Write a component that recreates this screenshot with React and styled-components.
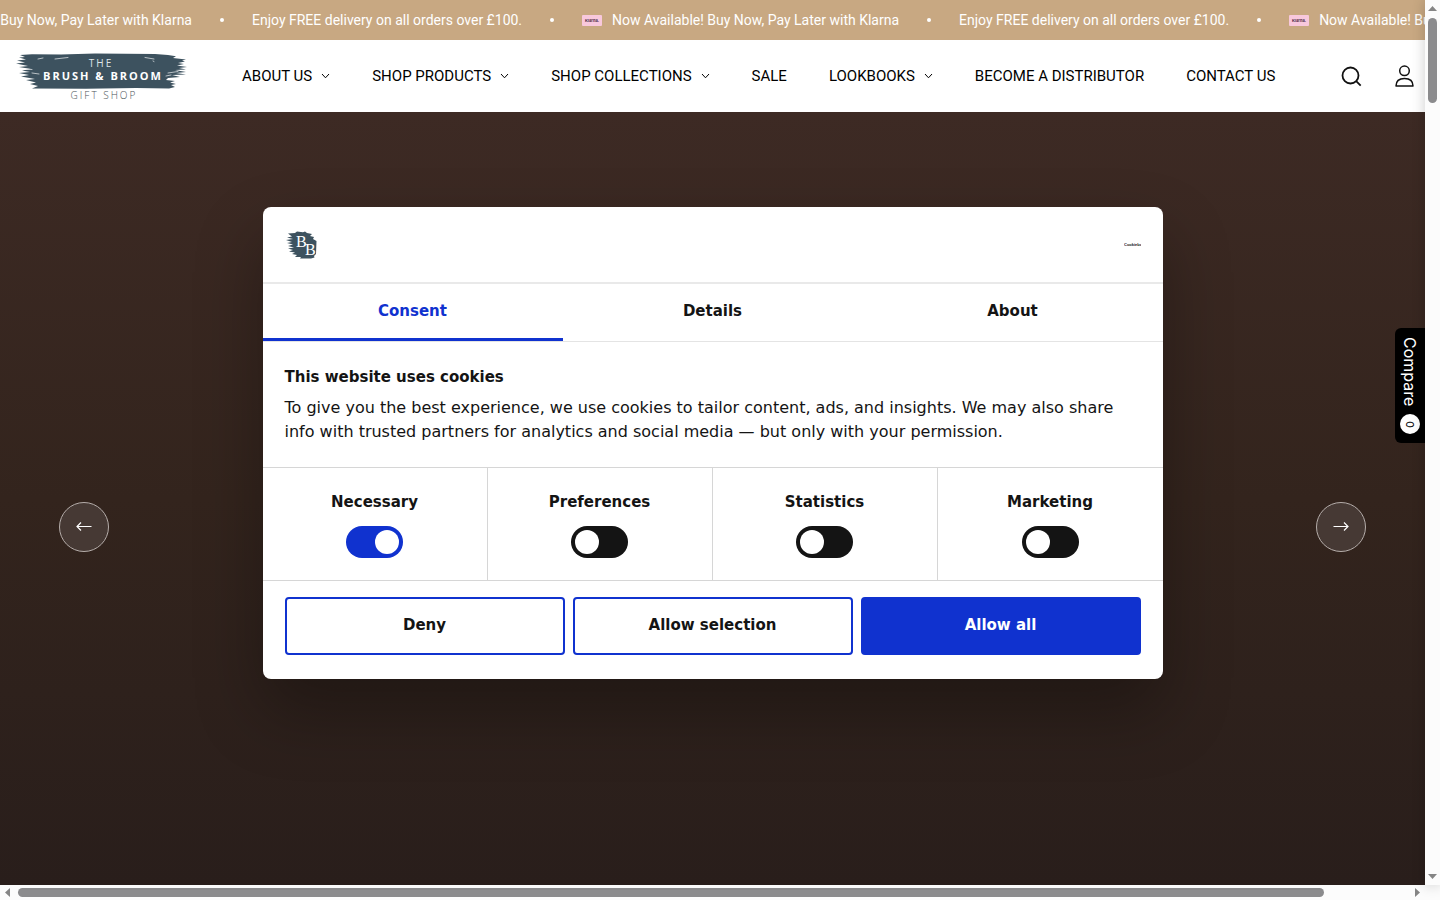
import React, { useState } from "react";
import styled, { createGlobalStyle, css } from "styled-components";

const GlobalStyle = createGlobalStyle`
  * {
    box-sizing: border-box;
  }
  body {
    margin: 0;
    background: #ffffff;
    font-family: Roboto, "Liberation Sans", sans-serif;
  }
`;

const Shell = styled.div`
  display: grid;
  grid-template-columns: minmax(0, 1fr) 15px;
  grid-template-rows: minmax(0, 1fr) 15px;
  height: 100vh;
  overflow: hidden;
`;

const Page = styled.div`
  position: relative;
  display: flex;
  flex-direction: column;
  overflow: hidden;
`;

const Ticker = styled.div`
  flex: none;
  height: 40px;
  background: #c8a882;
  color: #ffffff;
  overflow: hidden;
`;

const TickerTrack = styled.div`
  display: flex;
  align-items: center;
  width: max-content;
  height: 40px;
  margin-left: -125px;
  font-size: 14px;
`;

const TickerItem = styled.span`
  display: flex;
  align-items: center;
  gap: 10px;
  white-space: nowrap;
`;

const TickerDot = styled.span`
  width: 4px;
  height: 4px;
  margin: 0 28px;
  border-radius: 50%;
  background: #ffffff;
`;

const KlarnaBadge = styled.svg`
  width: 20px;
  height: 11px;
`;

const Header = styled.header`
  flex: none;
  display: flex;
  align-items: center;
  height: 72px;
  padding: 0 10px 0 16px;
  background: #ffffff;
`;

const LogoLink = styled.a`
  display: block;
  height: 48px;
`;

const Nav = styled.nav`
  display: flex;
  gap: 42px;
  margin-left: 54px;
`;

const NavLink = styled.a`
  display: flex;
  align-items: center;
  gap: 9px;
  color: #000000;
  font-size: 15px;
  line-height: 24px;
  text-decoration: none;
  white-space: nowrap;
`;

const HeaderTools = styled.div`
  display: flex;
  gap: 31px;
  margin-left: auto;
`;

const IconButton = styled.button`
  display: flex;
  padding: 0;
  border: 0;
  background: none;
  color: #111111;
`;

const Hero = styled.main`
  flex: 1;
  display: flex;
  align-items: center;
  justify-content: space-between;
  padding: 57px 59px 0;
  background: linear-gradient(180deg, #3d2a24 0%, #33241d 50%, #291e1b 100%);
`;

const ArrowButton = styled.button`
  display: flex;
  align-items: center;
  justify-content: center;
  width: 50px;
  height: 50px;
  padding: 0;
  border: 1px solid #b5adaa;
  border-radius: 50%;
  background: #463934;
  color: #ffffff;
`;

const CompareTab = styled.button`
  position: absolute;
  top: 328px;
  right: 0;
  display: flex;
  align-items: center;
  justify-content: space-between;
  width: 30px;
  height: 115px;
  padding: 9px 0;
  border: 0;
  border-radius: 6px 0 0 6px;
  background: #000000;
  color: #ffffff;
  font-family: Inter, sans-serif;
  font-size: 16px;
  writing-mode: vertical-rl;
`;

const CompareCount = styled.span`
  display: flex;
  align-items: center;
  justify-content: center;
  width: 20px;
  height: 20px;
  border-radius: 50%;
  background: #ffffff;
  color: #000000;
  font-size: 11px;
`;

const Overlay = styled.div`
  position: absolute;
  inset: 0;
  display: flex;
  align-items: center;
  justify-content: center;
`;

const Dialog = styled.section`
  width: 900px;
  max-width: 90%;
  border-radius: 8px;
  background: #ffffff;
  color: #141414;
  font-family: "DejaVu Sans", sans-serif;
  font-size: 15px;
  box-shadow: 0 32px 68px rgba(0, 0, 0, 0.3);
  overflow: hidden;
`;

const DialogHeader = styled.div`
  display: flex;
  align-items: center;
  justify-content: space-between;
  height: 77px;
  padding: 2px 22px 0;
  border-bottom: 2px solid #e9e9e9;
`;

const Tabs = styled.div`
  display: grid;
  grid-template-columns: repeat(3, 1fr);
  border-bottom: 1px solid #e4e4e4;
`;

const Tab = styled.button`
  height: 57px;
  padding: 0;
  border: 0;
  border-bottom: 3px solid ${(props) => (props.$active ? "#1032cf" : "transparent")};
  background: none;
  color: ${(props) => (props.$active ? "#1032cf" : "#141414")};
  font-family: inherit;
  font-size: 15px;
  font-weight: 700;
`;

const DialogBody = styled.div`
  height: 125px;
  padding: 23px 22px 0;
`;

const BodyTitle = styled.h2`
  margin: 0 0 7px;
  font-size: 15px;
  line-height: 24px;
`;

const BodyText = styled.p`
  margin: 0;
  font-size: 16px;
  line-height: 24px;
`;

const Categories = styled.div`
  display: grid;
  grid-template-columns: repeat(4, 1fr);
  border-top: 1px solid #d6d6d6;
  border-bottom: 1px solid #d6d6d6;
`;

const Category = styled.label`
  display: flex;
  flex-direction: column;
  align-items: center;
  gap: 12px;
  height: 112px;
  padding-top: 22px;
  border-right: 1px solid #d6d6d6;
  font-weight: 700;
  line-height: 24px;
  &:last-child {
    border-right: 0;
  }
`;

const Switch = styled.input`
  appearance: none;
  width: 57px;
  height: 32px;
  margin: 0;
  padding: 4px;
  border-radius: 16px;
  background: #141414;
  &::before {
    content: "";
    display: block;
    width: 24px;
    height: 24px;
    border-radius: 50%;
    background: #ffffff;
  }
  &:checked {
    background: #1032cf;
  }
  &:checked::before {
    margin-left: auto;
  }
`;

const DialogFooter = styled.div`
  display: grid;
  grid-template-columns: repeat(3, 1fr);
  gap: 8px;
  padding: 16px 22px 24px;
`;

const ConsentButton = styled.button`
  height: 58px;
  padding: 0 0 2px;
  border: 2px solid #1032cf;
  border-radius: 4px;
  background: #ffffff;
  color: #141414;
  font-family: inherit;
  font-size: 15px;
  font-weight: 700;
  ${(props) =>
    props.$primary &&
    css`
      background: #1032cf;
      color: #ffffff;
    `}
`;

const ScrollBar = styled.div`
  display: flex;
  align-items: center;
  justify-content: space-between;
  background: #fcfcfc;
  flex-direction: ${(props) => (props.$vertical ? "column" : "row")};
  padding: ${(props) => (props.$vertical ? "6px 0" : "0 5px")};
  ${(props) =>
    props.$vertical &&
    css`
      position: relative;
      box-shadow: 0 0 14px rgba(0, 0, 0, 0.2);
    `}
`;

const ScrollTrack = styled.div`
  flex: 1;
  display: flex;
  flex-direction: ${(props) => (props.$vertical ? "column" : "row")};
  margin: ${(props) => (props.$vertical ? "7px 0" : "0 8px")};
`;

const ScrollThumb = styled.div`
  border-radius: 5px;
  background: #8b8b8d;
  ${(props) =>
    props.$vertical
      ? css`
          width: 9px;
          height: 10%;
        `
      : css`
          width: 94%;
          height: 9px;
        `}
`;

const ScrollCorner = styled.div`
  background: #fcfcfc;
`;

const navItems = [
  { label: "ABOUT US", menu: true },
  { label: "SHOP PRODUCTS", menu: true },
  { label: "SHOP COLLECTIONS", menu: true },
  { label: "SALE" },
  { label: "LOOKBOOKS", menu: true },
  { label: "BECOME A DISTRIBUTOR" },
  { label: "CONTACT US" },
];

const tabs = ["Consent", "Details", "About"];
const categories = ["Necessary", "Preferences", "Statistics", "Marketing"];

const Chevron = () => (
  <svg width="9" height="6" viewBox="0 0 9 6" fill="none" stroke="#000000">
    <path d="M1 1l3.5 3.8L8 1" />
  </svg>
);

const Klarna = () => (
  <KlarnaBadge viewBox="0 0 20 11">
    <rect width="20" height="11" rx="1" fill="#f8c8dc" />
    <text x="10" y="7" textAnchor="middle" fontSize="4" fontWeight="700" fontFamily="Inter, sans-serif" fill="#4a2a48">
      Klarna.
    </text>
  </KlarnaBadge>
);

const Logo = () => (
  <svg width="172" height="48" viewBox="0 0 172 48">
    <path
      fill="#3d525f"
      d="M4 3L16 2.200L45 2.600L79 1.600L139 2L152 3L160 4.200L157 6L170 7.500L166 8.600L169 9.500L162 11L168 12L161 13.500L171 15L163 16L170 17.500L159 18L170 20L160 21L170 22.500L156 23L164 25L152 26L150 28L159 29L154 30.500L160 32L155 33L159 35L153 36.500L120 36L70 36.800L16 36.500L22 34L14 32L20 30.500L10 28L19 27L5 24.500L13 23L3 21L14 20L6 18.500L15 17L3 15L12 14L0 11.500L9 10.500L1 8.500L10 7.500L3 5.500L9 5Z"
    />
    <g fill="none" stroke="#ffffff" strokeWidth="0.8" strokeLinecap="round" opacity="0.8">
      <path d="M22 7l5-1M39 7l13-1.500M129 5.500l9 1.500M137 9l1 .5M7 17l9 .5M16 21l7 1M152 21l10-1.500M150 24l5-1" />
    </g>
    <g fontFamily='"Open Sans", sans-serif' textAnchor="middle">
      <text x="85" y="15" fontSize="10" letterSpacing="2" fill="#dfe5e8">THE</text>
      <text x="87" y="28" fontSize="11" fontWeight="700" letterSpacing="2" fill="#ffffff">BRUSH &amp; BROOM</text>
      <text x="88" y="47" fontSize="10" fontWeight="300" letterSpacing="2" fill="#4a5358">GIFT SHOP</text>
    </g>
  </svg>
);

const Emblem = () => (
  <svg width="32" height="30" viewBox="0 0 32 30">
    <path
      fill="#3d525f"
      d="M3 3.500L10 3L12 1.500L18 2.200L20 1.500L22 3L27 4L25 6L29 7L28 9L31.500 11L31 24L29 26L29.500 27.500L26 28.500L15 28.500L16 27L10 27L12 25L7 24L10 22.500L4 21.500L8 20L3 18.500L9 17.500L3 16L8 14.500L2 13L7 12L1 10L8 9L2 7.500L7 6.500Z"
    />
    <g fill="#ffffff" fontFamily='"Liberation Serif", serif' fontSize="16">
      <text x="11" y="17">B</text>
      <text x="20" y="25">B</text>
    </g>
  </svg>
);

const Cookiebot = () => (
  <svg width="17" height="6" viewBox="0 0 17 6" fill="#141414" fontFamily='"Liberation Sans", sans-serif'>
    <text x="0" y="4" fontSize="4" fontWeight="700">Cookiebot</text>
  </svg>
);

const App = () => {
  const [tab, setTab] = useState("Consent");

  return (
    <>
      <GlobalStyle />
      <Shell>
        <Page>
          <Ticker>
            <TickerTrack>
              {[0, 1, 2].map((n) => (
                <React.Fragment key={n}>
                  <TickerItem>
                    <Klarna />
                    Now Available! Buy Now, Pay Later with Klarna
                  </TickerItem>
                  <TickerDot />
                  <TickerItem>Enjoy FREE delivery on all orders over £100.</TickerItem>
                  <TickerDot />
                </React.Fragment>
              ))}
            </TickerTrack>
          </Ticker>
          <Header>
            <LogoLink href="#" aria-label="The Brush & Broom Gift Shop">
              <Logo />
            </LogoLink>
            <Nav>
              {navItems.map((item) => (
                <NavLink href="#" key={item.label}>
                  {item.label}
                  {item.menu && <Chevron />}
                </NavLink>
              ))}
            </Nav>
            <HeaderTools>
              <IconButton aria-label="Search">
                <svg width="22" height="22" viewBox="0 0 22 22" fill="none" stroke="currentColor" strokeWidth="1.8">
                  <circle cx="10.500" cy="10.500" r="8" />
                  <path d="M16.200 16.200l4.500 4.500" />
                </svg>
              </IconButton>
              <IconButton aria-label="Account">
                <svg width="22" height="22" viewBox="0 0 22 22" fill="none" stroke="currentColor" strokeWidth="1.5">
                  <circle cx="11.500" cy="5.800" r="4.800" />
                  <path d="M3 21c0-5 3-7.600 8.500-7.600s8.500 2.600 8.500 7.600z" strokeLinejoin="round" />
                </svg>
              </IconButton>
            </HeaderTools>
          </Header>
          <Hero>
            <ArrowButton aria-label="Previous slide">
              <svg width="16" height="10" viewBox="0 0 16 10" fill="none" stroke="currentColor" strokeWidth="1.200">
                <path d="M15.500 4.500H1M5 .5L1 4.500l4 4" />
              </svg>
            </ArrowButton>
            <ArrowButton aria-label="Next slide">
              <svg width="16" height="10" viewBox="0 0 16 10" fill="none" stroke="currentColor" strokeWidth="1.200">
                <path d="M.5 4.500H15M11 .5l4 4-4 4" />
              </svg>
            </ArrowButton>
          </Hero>
          <Overlay>
            <Dialog role="dialog" aria-labelledby="consent-title">
              <DialogHeader>
                <Emblem />
                <Cookiebot />
              </DialogHeader>
              <Tabs role="tablist">
                {tabs.map((name) => (
                  <Tab key={name} role="tab" aria-selected={tab === name} $active={tab === name} onClick={() => setTab(name)}>
                    {name}
                  </Tab>
                ))}
              </Tabs>
              <DialogBody>
                <BodyTitle id="consent-title">This website uses cookies</BodyTitle>
                <BodyText>
                  To give you the best experience, we use cookies to tailor content, ads, and insights. We may also share
                  info with trusted partners for analytics and social media — but only with your permission.
                </BodyText>
              </DialogBody>
              <Categories>
                {categories.map((name) => (
                  <Category key={name}>
                    {name}
                    <Switch type="checkbox" defaultChecked={name === "Necessary"} />
                  </Category>
                ))}
              </Categories>
              <DialogFooter>
                <ConsentButton>Deny</ConsentButton>
                <ConsentButton>Allow selection</ConsentButton>
                <ConsentButton $primary>Allow all</ConsentButton>
              </DialogFooter>
            </Dialog>
          </Overlay>
          <CompareTab>
            Compare
            <CompareCount>0</CompareCount>
          </CompareTab>
        </Page>
        <ScrollBar $vertical>
          <svg width="9" height="5" viewBox="0 0 9 5" fill="#858585"><path d="M0 5L4.500 0 9 5z" /></svg>
          <ScrollTrack $vertical>
            <ScrollThumb $vertical />
          </ScrollTrack>
          <svg width="9" height="5" viewBox="0 0 9 5" fill="#858585"><path d="M0 0h9L4.500 5z" /></svg>
        </ScrollBar>
        <ScrollBar>
          <svg width="5" height="9" viewBox="0 0 5 9" fill="#858585"><path d="M5 0v9L0 4.500z" /></svg>
          <ScrollTrack>
            <ScrollThumb />
          </ScrollTrack>
          <svg width="5" height="9" viewBox="0 0 5 9" fill="#858585"><path d="M0 0l5 4.500L0 9z" /></svg>
        </ScrollBar>
        <ScrollCorner />
      </Shell>
    </>
  );
};

export default App;
